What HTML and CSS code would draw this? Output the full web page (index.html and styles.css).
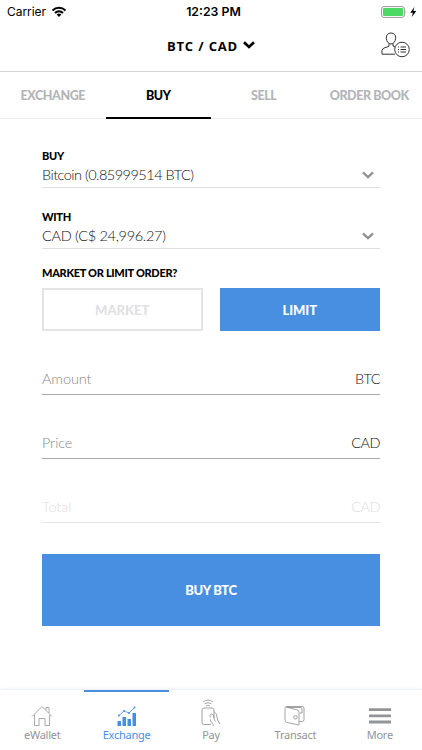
FILE: index.html
```html
<!DOCTYPE html>
<html lang="en">
<head>
<meta charset="utf-8">
<title>BTC / CAD</title>
<link rel="stylesheet" href="styles.css">
</head>
<body>
<div class="app">
  <div class="status">
    <div class="status-left"><span class="t carrier">Carrier</span>
      <svg width="16" height="12" viewBox="0 0 16 12" fill="none" stroke="#000" stroke-width="2"><path d="M1.500 4.400C5.200.9 10.800.9 14.500 4.400M4 7c2.300-2.200 5.700-2.200 8 0"/><path d="M8 11 5.600 8.600q2.400-2 4.800 0z" fill="#000" stroke="none"/></svg>
    </div>
    <span class="t clock">12:23 PM</span>
    <div class="status-right">
      <svg width="37" height="12" viewBox="0 0 37 12"><rect x=".6" y=".6" width="22.800" height="10.800" rx="2.400" fill="#fff" stroke="#999"/><rect x="2" y="2" width="20" height="8" rx="1" fill="#4cd964"/><path d="M24.700 4q1.500 2 0 4z" fill="#999"/><path d="M33.500 1 29.200 6.700h2.700L30.800 11l4.500-6h-2.900z"/></svg>
    </div>
  </div>
  <header class="header">
    <span class="t pair">BTC / CAD</span>
    <svg class="pair-arrow" width="12" height="8" viewBox="0 0 12 8" fill="none" stroke="#000" stroke-width="2.700"><path d="m1 1.300 5 4.700 5-4.700"/></svg>
    <svg class="profile" width="30" height="27" viewBox="0 0 30 27" fill="none" stroke="#333" stroke-width="1"><path d="M10 1c3 0 5 2 4.700 5.300C14.400 9.500 12.500 12 10 12S5.600 9.500 5.300 6.300C5 3 7 1 10 1zM8 11.500v2.700c-2 1.500-6.500 1-7 4.300v3.700h13M12 11.500v2.500l2 1"/><circle cx="21" cy="17.500" r="7.300" fill="#fff"/><path d="M19.500 15H25M19.500 17.500H25M19.500 20H25M17 15h1M17 17.500h1M17 20h1"/></svg>
  </header>
  <nav class="tabs">
    <div class="tab"><span class="t">EXCHANGE</span></div>
    <div class="tab active"><span class="t">BUY</span></div>
    <div class="tab"><span class="t">SELL</span></div>
    <div class="tab"><span class="t">ORDER BOOK</span></div>
  </nav>
  <main class="form">
    <section class="select">
      <div class="label"><span class="t">BUY</span></div>
      <div class="value"><span class="t">Bitcoin (0.85999514 BTC)</span><svg width="12" height="8" viewBox="0 0 12 8" fill="none" stroke="#929292" stroke-width="2.400"><path d="m1 1.300 5 4.700 5-4.700"/></svg></div>
    </section>
    <section class="select">
      <div class="label"><span class="t">WITH</span></div>
      <div class="value fiat"><span class="t">CAD (C$ 24,996.27)</span><svg width="12" height="8" viewBox="0 0 12 8" fill="none" stroke="#929292" stroke-width="2.400"><path d="m1 1.300 5 4.700 5-4.700"/></svg></div>
    </section>
    <div class="label order-label"><span class="t">MARKET OR LIMIT ORDER?</span></div>
    <div class="choices">
      <button class="choice"><span class="t">MARKET</span></button>
      <button class="choice selected"><span class="t">LIMIT</span></button>
    </div>
    <div class="field"><span class="t hint">Amount</span><span class="t unit">BTC</span></div>
    <div class="field"><span class="t hint">Price</span><span class="t unit">CAD</span></div>
    <div class="field disabled"><span class="t hint">Total</span><span class="t unit">CAD</span></div>
    <button class="submit"><span class="t">BUY BTC</span></button>
  </main>
  <footer class="bottom">
    <div class="item">
      <svg width="22" height="22" viewBox="0 0 22 22" fill="none" stroke="currentColor" stroke-width=".8"><path d="m1 11.500 10-10 10 10M3.500 10v10.500H8v-7h6v7h4.500V10M15 5V2.500h3V8"/></svg>
      <span class="t">eWallet</span>
    </div>
    <div class="item current">
      <svg width="22" height="22" viewBox="0 0 22 22" fill="currentColor"><path d="M1.500 16H5v5H1.500zM6.500 12H10v9H6.500zM11.500 14H15v7h-3.500zM16.500 8H20v13h-3.500z"/><path d="m3 10.500 5-4.500 5 2 5.500-5.500" fill="none" stroke="currentColor" stroke-width=".8"/><circle cx="3" cy="10.500" r="1"/><circle cx="8" cy="6" r="1"/><circle cx="13" cy="8" r="1"/><circle cx="18.500" cy="2.500" r="1"/></svg>
      <span class="t">Exchange</span>
    </div>
    <div class="item">
      <svg class="pay" width="22" height="28" viewBox="0 0 22 28" fill="none" stroke="currentColor" stroke-width=".85"><path d="M3.200 2.700q4.800-3.400 9.600 0M4.700 4.800q3.300-2.400 6.600 0M6.200 6.900q1.800-1.400 3.600 0M11 25.500H4Q2 25.500 2 23.500V11Q2 9 4 9h8q2 0 2 2v8M14 12.500q3 2 3 5.500 0 3 3 7M13.500 27c0-2-3-4-3.300-6.700M14 19q0 2 1.500 3.500"/><path d="M11 18.500q-2-1.500-.5-3t3 .5L14 19"/></svg>
      <span class="t">Pay</span>
    </div>
    <div class="item">
      <svg width="22" height="22" viewBox="0 0 22 22" fill="none" stroke="currentColor" stroke-width=".85"><path d="m2 2 11.500 3q1.500.5 1.500 2v13L3.200 17.500Q1 17 1 15V3.500q0-2 2-2h15.500q1.500 0 1.500 1.500v11.500q0 2-2 2h-3M3 2.500h14q1 0 1 1.500v4h-2"/><circle cx="11.500" cy="12.300" r="1.800"/></svg>
      <span class="t">Transact</span>
    </div>
    <div class="item">
      <svg width="22" height="22" viewBox="0 0 22 22" fill="none" stroke="currentColor" stroke-width="2.800"><path d="M0 4.600h22M0 10.800h22M0 17h22"/></svg>
      <span class="t">More</span>
    </div>
  </footer>
</div>
</body>
</html>
```
FILE: styles.css
```css
* { box-sizing: border-box; }
body { margin: 0; background: #fff; color: #000; font-family: Lato, sans-serif; }
button { font: inherit; border: 0; padding: 0; }
svg { display: block; flex: none; }
.t { white-space: nowrap; }
.app { height: 750px; display: flex; flex-direction: column; overflow: hidden; }
.status { height: 22px; display: grid; grid-template-columns: 1fr auto 1fr; align-items: center; padding: 0 4px 0 7px; font: 12px/22px Inter, sans-serif; }
.status-left { display: flex; align-items: center; gap: 5px; }
.carrier { letter-spacing: -.05px; }
.clock { font-weight: 600; font-size: 12.300px; padding: 1px 0 0 2px; }
.status-right { display: flex; justify-content: flex-end; }
.header { height: 50px; border-bottom: 1px solid #d4d4d4; display: flex; align-items: center; justify-content: center; gap: 5px; position: relative; }
.pair { font: 700 13px/18px "Open Sans", sans-serif; letter-spacing: .85px; margin-top: -2px; }
.pair-arrow { margin-top: -3px; }
.profile { position: absolute; right: 11px; top: 10px; }
.tabs { height: 47px; display: grid; grid-template-columns: repeat(4, 1fr); border-bottom: 1px solid #eee; }
.tab { height: 47px; display: flex; align-items: center; justify-content: center; color: #b3b5b8; font-size: 12.500px; font-weight: 900; letter-spacing: -.42px; border-bottom: 2px solid transparent; padding-top: 1px; }
.tab.active { color: #000; border-color: #000; }
.form { padding: 28px 42px 0; }
.select { height: 41px; margin-bottom: 20px; border-bottom: 1px solid #dedede; }
.label { height: 16px; font-size: 11px; font-weight: 900; line-height: 17px; letter-spacing: -.3px; }
.value { height: 23px; display: flex; align-items: center; justify-content: space-between; padding-right: 6px; font-size: 14.500px; font-weight: 300; letter-spacing: -.52px; color: #111; }
.fiat { letter-spacing: -.3px; }
.order-label { margin-top: -5px; }
.choices { display: grid; grid-template-columns: 1fr 1fr; gap: 17px; margin-top: 8px; height: 43px; }
.choice { border: 2px solid #e2e4e6; background: #fff; color: #dfe1e5; font-size: 13px; font-weight: 900; }
.choice.selected { background: #488fe1; border-color: #488fe1; color: #fff; letter-spacing: -.1px; }
.field { height: 64px; display: flex; justify-content: space-between; align-items: flex-end; padding-bottom: 6px; border-bottom: 1px solid #aaa; font-size: 14.500px; font-weight: 300; line-height: 18px; color: #111; }
.unit { letter-spacing: -.5px; }
.hint { color: #888; letter-spacing: -.1px; }
.disabled, .disabled .hint { color: #dcdde1; }
.disabled { border-color: #e5e5e5; }
.submit { display: block; width: 100%; height: 72px; margin-top: 31px; background: #488fe1; color: #fff; font-size: 13px; font-weight: 900; letter-spacing: -.4px; }
.bottom { height: 60px; margin-top: auto; display: grid; grid-template-columns: repeat(5, 1fr); box-shadow: 0 -1px 3px #e8edf3; }
.item { color: #929497; display: flex; flex-direction: column; align-items: center; padding-top: 13px; border-top: 2px solid transparent; font: 11px/14px "Noto Sans", sans-serif; letter-spacing: -.25px; gap: 1px; }
.item.current { color: #488fe1; border-color: #488fe1; }
.pay { margin-top: -6px; }
```
